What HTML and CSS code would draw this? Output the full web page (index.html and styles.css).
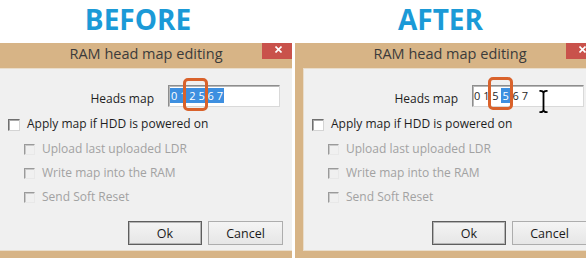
FILE: index.html
```html
<!DOCTYPE html>
<html lang="en">
<head>
<meta charset="utf-8">
<title>RAM head map editing - before / after</title>
<link rel="stylesheet" href="styles.css">
</head>
<body>
<div class="page">
  <div class="headings">
    <h1 class="heading heading-before">BEFORE</h1>
    <h1 class="heading heading-after">AFTER</h1>
  </div>
  <div class="shots">
    <div class="shot shot-left">
      <div class="window window-left">
        <div class="titlebar">
          <span class="title">RAM head map editing</span>
          <span class="close"><svg class="close-x" width="7" height="7" viewBox="0 0 7 7"><path d="M0.5 0.5 L6.5 6.5 M6.5 0.5 L0.5 6.5" stroke="#fff" stroke-width="1.6" fill="none"/></svg></span>
        </div>
        <div class="client">
          <div class="heads-row">
            <span class="label">Heads map</span>
            <span class="input"><span class="sel">0 1 2 5 6 7</span></span>
          </div>
          <div class="check-row">
            <span class="box"></span>
            <span class="check-text">Apply map if HDD is powered on</span>
          </div>
          <div class="sub-list">
            <div class="check-row disabled"><span class="box"></span><span class="check-text">Upload last uploaded LDR</span></div>
            <div class="check-row disabled"><span class="box"></span><span class="check-text">Write map into the RAM</span></div>
            <div class="check-row disabled"><span class="box"></span><span class="check-text">Send Soft Reset</span></div>
          </div>
          <div class="buttons">
            <span class="btn btn-default">Ok</span>
            <span class="btn">Cancel</span>
          </div>
          <span class="mark mark-left"></span>
        </div>
      </div>
    </div>
    <div class="shot shot-right">
      <div class="window">
        <div class="titlebar">
          <span class="title">RAM head map editing</span>
          <span class="close"><svg class="close-x" width="7" height="7" viewBox="0 0 7 7"><path d="M0.5 0.5 L6.5 6.5 M6.5 0.5 L0.5 6.5" stroke="#fff" stroke-width="1.6" fill="none"/></svg></span>
        </div>
        <div class="client">
          <div class="heads-row">
            <span class="label">Heads map</span>
            <span class="input"><span class="plain">0 1 5 </span><span class="sel">5</span><span class="plain"> 6 7</span></span>
          </div>
          <div class="check-row">
            <span class="box"></span>
            <span class="check-text">Apply map if HDD is powered on</span>
          </div>
          <div class="sub-list">
            <div class="check-row disabled"><span class="box"></span><span class="check-text">Upload last uploaded LDR</span></div>
            <div class="check-row disabled"><span class="box"></span><span class="check-text">Write map into the RAM</span></div>
            <div class="check-row disabled"><span class="box"></span><span class="check-text">Send Soft Reset</span></div>
          </div>
          <div class="buttons">
            <span class="btn btn-default">Ok</span>
            <span class="btn">Cancel</span>
          </div>
          <span class="mark mark-right"></span>
          <svg class="ibeam" width="9" height="23" viewBox="0 0 9 23"><path d="M0.5 1 Q4.5 0.5 4.5 3.5 Q4.5 0.5 8.5 1 M4.5 3 L4.5 20 M0.5 22 Q4.5 22.5 4.5 19.5 Q4.5 22.5 8.5 22" stroke="#000" stroke-width="1.8" fill="none"/></svg>
        </div>
      </div>
    </div>
  </div>
</div>
</body>
</html>
```

FILE: styles.css
```css
html, body {
  margin: 0;
  padding: 0;
  background: #ffffff;
}

.page {
  width: 586px;
  height: 258px;
  overflow: hidden;
  font-family: "Open Sans", "Noto Sans", sans-serif;
}

.headings {
  display: flex;
  height: 43px;
}

.heading {
  margin: 0;
  box-sizing: border-box;
  font-family: "Open Sans", "Noto Sans", sans-serif;
  font-weight: 700;
  font-size: 28px;
  line-height: 39px;
  color: #1b9ad7;
  text-align: center;
}

.heading-before {
  width: 292px;
  padding-right: 16px;
}

.heading-after {
  width: 294px;
  padding-left: 3px;
}

.shots {
  display: flex;
  gap: 3px;
  height: 215px;
}

.shot {
  height: 215px;
  overflow: hidden;
  display: flex;
}

.shot-left {
  width: 292px;
}

.shot-right {
  width: 291px;
}

.window {
  flex-shrink: 0;
  width: 310px;
  height: 215px;
  background: #d7b486;
  display: flex;
  flex-direction: column;
}

.window-left {
  margin-left: -9px;
}

.titlebar {
  height: 25px;
  display: grid;
  grid-template-columns: 39px 1fr 39px;
  align-items: start;
}

.title {
  grid-column: 2;
  text-align: center;
  font-size: 14.5px;
  line-height: 21px;
  color: #3b3b3b;
  white-space: nowrap;
}

.close {
  grid-column: 3;
  width: 33px;
  height: 16px;
  background: #c9524b;
  display: flex;
  justify-content: center;
  align-items: flex-start;
  padding-top: 3px;
  box-sizing: border-box;
}

.close-x {
  display: block;
}

.client {
  position: relative;
  margin: 0 8px;
  height: 183px;
  box-sizing: border-box;
  border: 1px solid #e9ddcb;
  background: #f0f0f0;
  display: flex;
  flex-direction: column;
  font-size: 12px;
  color: #1e1e1e;
}

.heads-row {
  display: grid;
  grid-template-columns: 154px 112px;
  column-gap: 14px;
  margin-top: 16px;
  height: 22px;
}

.label {
  text-align: right;
  align-self: end;
  line-height: 16px;
  white-space: nowrap;
}

.input {
  box-sizing: border-box;
  height: 22px;
  background: #ffffff;
  border-top: 1px solid #8d8d8d;
  border-left: 1px solid #8d8d8d;
  border-right: 1px solid #d9d9d9;
  border-bottom: 1px solid #d9d9d9;
  box-shadow: inset 1px 1px 0 #b8b8b8;
  padding: 2px 0 0 1px;
  font-size: 11px;
  line-height: 15px;
  white-space: pre;
  color: #1e1e1e;
}

.sel {
  background: #3d8fe0;
  color: #ffffff;
  display: inline-block;
  padding: 1px 1px 0 1px;
  line-height: 14px;
}

.plain {
  display: inline-block;
  padding-top: 1px;
  line-height: 14px;
}

.check-row {
  display: flex;
  align-items: flex-start;
  height: 16px;
  line-height: 16px;
  padding-left: 8px;
  margin-top: 9px;
}

.box {
  width: 12px;
  height: 12px;
  box-sizing: border-box;
  margin-top: 3px;
  margin-right: 7px;
  background: #ffffff;
  border-top: 1px solid #6f6f6f;
  border-left: 1px solid #6f6f6f;
  border-right: 1px solid #d4d4d4;
  border-bottom: 1px solid #d4d4d4;
  box-shadow: inset 1px 1px 0 #a9a9a9;
}

.check-text {
  white-space: nowrap;
}

.sub-list {
  display: flex;
  flex-direction: column;
  gap: 8px;
  margin-top: 9px;
}

.sub-list .check-row {
  margin-top: 0;
  padding-left: 24px;
}

.disabled .box {
  width: 11px;
  height: 11px;
  background: #f0f0f0;
  border-top: 1px solid #9a9a9a;
  border-left: 1px solid #9a9a9a;
  border-right: 1px solid #e8e8e8;
  border-bottom: 1px solid #e8e8e8;
  box-shadow: inset 1px 1px 0 #c9c9c9;
}

.disabled .check-text {
  color: #a2a2a2;
}

.buttons {
  display: flex;
  justify-content: flex-end;
  gap: 6px;
  padding-right: 9px;
  margin-top: 16px;
}

.btn {
  box-sizing: border-box;
  width: 75px;
  height: 24px;
  border: 1px solid #adadad;
  background: linear-gradient(#f4f4f4, #e6e6e6);
  display: flex;
  justify-content: center;
  align-items: center;
  font-size: 12.5px;
  color: #1a1a1a;
}

.btn-default {
  width: 74px;
  border: 1px solid #5e5e5e;
  box-shadow: inset 0 0 0 1px #b5b5b5;
}

.mark {
  position: absolute;
  box-sizing: border-box;
  width: 25px;
  height: 33px;
  border: 3px solid #d9622b;
  border-radius: 5px;
}

.mark-left {
  left: 183px;
  top: 9px;
}

.mark-right {
  left: 184px;
  top: 8px;
}

.ibeam {
  position: absolute;
  left: 235px;
  top: 21px;
}
```
